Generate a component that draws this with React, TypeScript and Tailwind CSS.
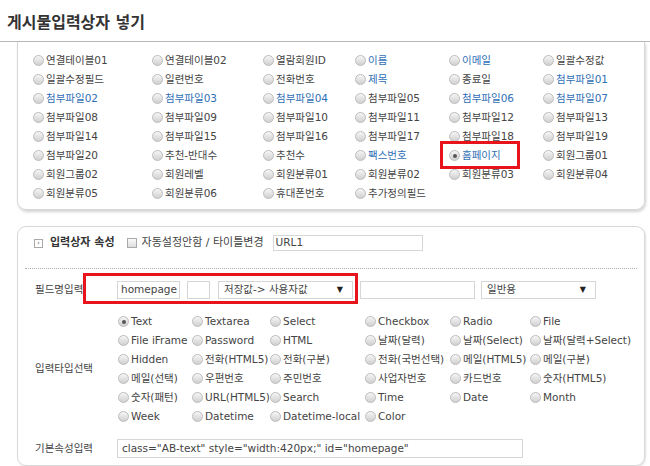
import React from 'react';

// 상단 필드 목록 (6열)
const fields: { label: string; blue?: boolean; checked?: boolean; marked?: boolean }[][] = [
  [{ label: '연결테이블01' }, { label: '연결테이블02' }, { label: '열람회원ID' }, { label: '이름', blue: true }, { label: '이메일', blue: true }, { label: '일괄수정값' }],
  [{ label: '일괄수정필드' }, { label: '일련번호' }, { label: '전화번호' }, { label: '제목', blue: true }, { label: '종료일' }, { label: '첨부파일01', blue: true }],
  [{ label: '첨부파일02', blue: true }, { label: '첨부파일03', blue: true }, { label: '첨부파일04', blue: true }, { label: '첨부파일05' }, { label: '첨부파일06', blue: true }, { label: '첨부파일07', blue: true }],
  [{ label: '첨부파일08' }, { label: '첨부파일09' }, { label: '첨부파일10' }, { label: '첨부파일11' }, { label: '첨부파일12' }, { label: '첨부파일13' }],
  [{ label: '첨부파일14' }, { label: '첨부파일15' }, { label: '첨부파일16' }, { label: '첨부파일17' }, { label: '첨부파일18' }, { label: '첨부파일19' }],
  [{ label: '첨부파일20' }, { label: '추천-반대수' }, { label: '추천수' }, { label: '팩스번호', blue: true }, { label: '홈페이지', blue: true, checked: true, marked: true }, { label: '회원그룹01' }],
  [{ label: '회원그룹02' }, { label: '회원레벨' }, { label: '회원분류01' }, { label: '회원분류02' }, { label: '회원분류03' }, { label: '회원분류04' }],
  [{ label: '회원분류05' }, { label: '회원분류06' }, { label: '휴대폰번호' }, { label: '추가정의필드' }],
];

const types = [
  ['Text', 'Textarea', 'Select', 'Checkbox', 'Radio', 'File'],
  ['File iFrame', 'Password', 'HTML', '날짜(달력)', '날짜(Select)', '날짜(달력+Select)'],
  ['Hidden', '전화(HTML5)', '전화(구분)', '전화(국번선택)', '메일(HTML5)', '메일(구분)'],
  ['메일(선택)', '우편번호', '주민번호', '사업자번호', '카드번호', '숫자(HTML5)'],
  ['숫자(패턴)', 'URL(HTML5)', 'Search', 'Time', 'Date', 'Month'],
  ['Week', 'Datetime', 'Datetime-local', 'Color'],
];

function Radio({ checked }: { checked?: boolean }) {
  return (
    <span className="relative inline-flex w-[11px] h-[11px] shrink-0 items-center justify-center rounded-full border border-[#bcbcbc] bg-linear-to-b from-[#f6f6f6] to-[#d0d0d0]">
      {checked && <span className="w-[4px] h-[4px] rounded-full bg-[#555]" />}
    </span>
  );
}

function Select({ text, className }: { text: string; className: string }) {
  return (
    <div className={`flex items-center justify-between h-[18px] border border-[#d6d6d6] bg-white pl-[5px] pr-[9px] ${className}`}>
      <span>{text}</span>
      <span className="text-[8px] text-[#222]">▼</span>
    </div>
  );
}

export default function App() {
  return (
    <div
      className="w-[650px] h-[466px] overflow-hidden bg-white text-[10.5px] text-[#444]"
      style={{ fontFamily: '"DejaVu Sans", "Noto Sans CJK KR", sans-serif' }}
    >
      {/* 제목 */}
      <div className="h-[42px] pl-[7px] pt-[14px] border-b border-[#b8b8b8]">
        <h1 className="text-[16px] leading-[18px] font-bold text-[#333]">게시물입력상자 넣기</h1>
      </div>

      {/* 필드 목록 패널 */}
      <div className="ml-[17px] w-[628px] border border-t-0 border-[#d8d8d8] rounded-b-[9px] shadow-[1px_2px_3px_rgba(0,0,0,0.18)] pl-[15px] pt-[9px] pb-[6px]">
        <div className="grid grid-cols-[119px_111px_92px_94px_94px_1fr]">
          {fields.flat().map((f) => (
            <div key={f.label} className="relative flex items-center gap-[2px] h-[19px]">
              <Radio checked={f.checked} />
              <span className={`leading-none ${f.blue ? 'text-[#2f6fb6]' : 'text-[#444]'}`}>{f.label}</span>
              {f.marked && (
                <div className="absolute -left-[9px] -top-[5px] w-[80px] h-[28px] border-[3px] border-[#e8141c] z-10" />
              )}
            </div>
          ))}
        </div>
      </div>

      {/* 입력상자 속성 패널 */}
      <div className="mt-[16px] ml-[17px] w-[628px] h-[240px] border border-[#d8d8d8] rounded-[9px] shadow-[1px_1px_2px_rgba(0,0,0,0.12)] px-[7px]">
        <div className="flex items-center h-[18px] mt-[7px] pl-[9px]">
          <span className="flex items-center justify-center w-[9px] h-[9px] border border-[#aaa] text-[7px] leading-none text-[#666]">›</span>
          <span className="ml-[7px] text-[11px] font-bold text-[#333]">입력상자 속성</span>
          <span className="ml-[12px] w-[10px] h-[10px] border border-[#aaa] bg-linear-to-b from-[#fafafa] to-[#ddd]" />
          <span className="ml-[5px] text-[11px] text-[#444]">자동설정안함 / 타이틀변경</span>
          <div className="ml-[9px] w-[150px] h-[16px] border border-[#d6d6d6] flex items-center pl-[2px] text-[#444]">URL1</div>
        </div>

        <div className="mt-[16px] border-t border-dotted border-[#b0b0b0]" />

        {/* 필드명입력 */}
        <div className="relative flex items-center h-[18px] mt-[12px] pl-[10px]">
          <span className="w-[82px] text-[#444]">필드명입력</span>
          <div className="w-[63px] h-[18px] border border-[#d6d6d6] flex items-center pl-[3px]">homepage</div>
          <div className="ml-[7px] w-[23px] h-[18px] border border-[#d6d6d6]" />
          <Select text="저장값-> 사용자값" className="ml-[8px] w-[135px]" />
          <div className="ml-[7px] w-[115px] h-[18px] border border-[#d6d6d6]" />
          <Select text="일반용" className="ml-[6px] w-[115px]" />
          <div className="absolute left-[58px] -top-[8px] w-[275px] h-[31px] border-[3px] border-[#e8141c]" />
        </div>

        {/* 입력타입선택 */}
        <div className="flex items-center mt-[13px] pl-[10px]">
          <span className="w-[83px] text-[#444]">입력타입선택</span>
          <div className="grid grid-cols-[74px_78px_95px_85px_80px_1fr]">
            {types.flat().map((t, i) => (
              <div key={t} className="flex items-center gap-[2px] h-[19px] whitespace-nowrap">
                <Radio checked={i === 0} />
                <span className="leading-none">{t}</span>
              </div>
            ))}
          </div>
        </div>

        {/* 기본속성입력 */}
        <div className="flex items-center h-[19px] mt-[13px] pl-[10px]">
          <span className="w-[82px] text-[#444]">기본속성입력</span>
          <div className="w-[406px] h-[19px] border border-[#d6d6d6] flex items-center pl-[4px] whitespace-nowrap">
            class="AB-text" style="width:420px;" id="homepage"
          </div>
        </div>
      </div>
    </div>
  );
}
